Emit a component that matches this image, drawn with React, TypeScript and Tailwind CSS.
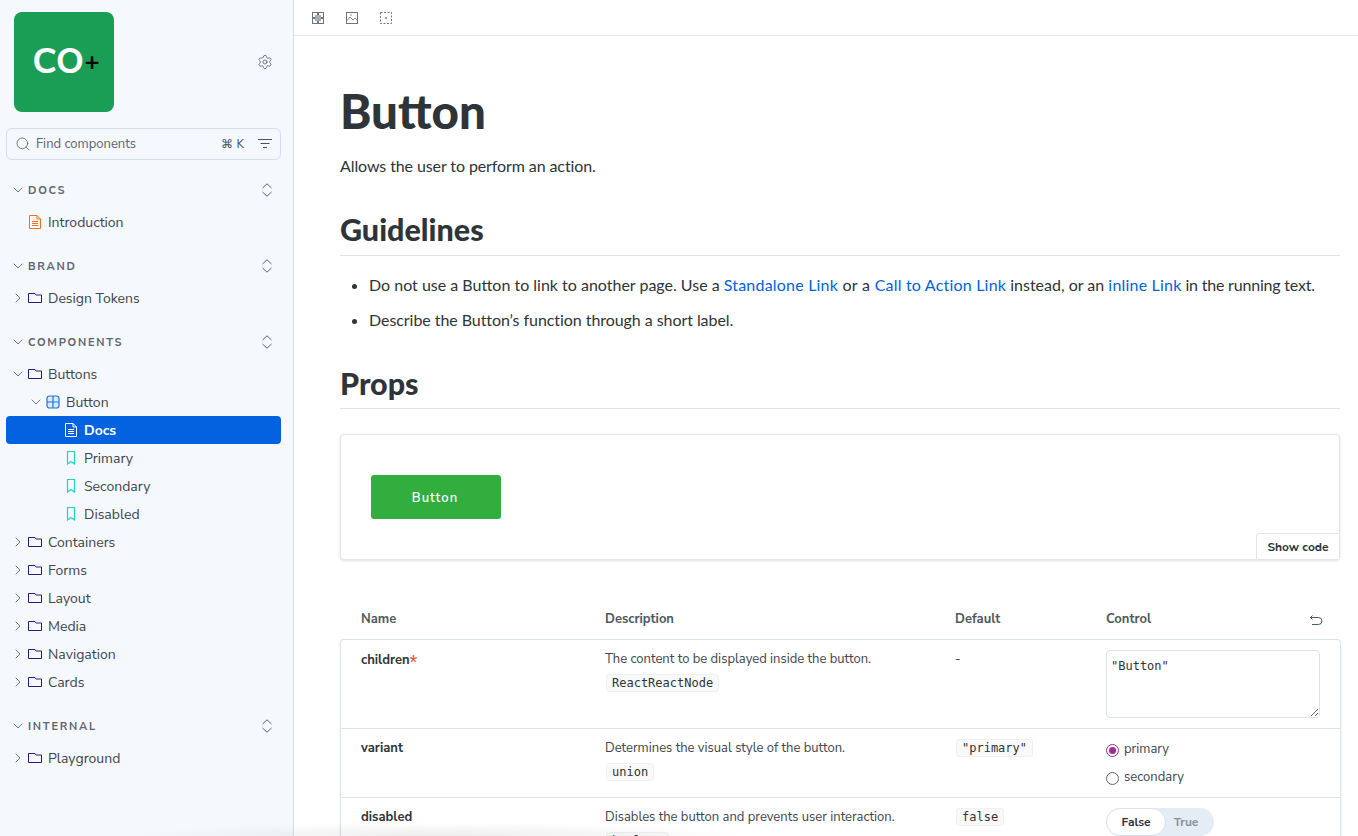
import React from "react";
import { ChevronDown, ChevronRight, Search, Settings } from "lucide-react";

const sans = "font-['Nunito_Sans','Noto_Sans','Open_Sans',sans-serif]";

function Folder() {
  return (
    <svg width="14" height="14" viewBox="0 0 14 14" fill="none" className="shrink-0">
      <path d="M.5 2.500h6.500l1 1.500h5.500v7.500H.5z" stroke="#2a1a7e" strokeWidth="1" />
    </svg>
  );
}
function Doc({ color }: { color: string }) {
  return (
    <svg width="12" height="14" viewBox="0 0 12 14" fill="none" className="shrink-0">
      <path d="M.5.5h7.500l3.500 3.500v9.500H.5z" stroke={color} />
      <path d="M8 .5V4h3.500M3 6.500h6M3 8.500h6M3 10.500h6" stroke={color} />
    </svg>
  );
}
function Mark() {
  return (
    <svg width="10" height="14" viewBox="0 0 10 14" fill="none" className="shrink-0">
      <path d="M1.500.5h7v12.500L5 10.500 1.500 13z" stroke="#22d3c5" strokeWidth="1.200" />
    </svg>
  );
}
function Comp() {
  return (
    <svg width="14" height="14" viewBox="0 0 14 14" fill="none" className="shrink-0">
      <rect x="1" y="1" width="12" height="12" rx="2.500" stroke="#1e77e0" strokeWidth="1.200" fill="#d9e8fa" />
      <path d="M7 1v12M1 7h12" stroke="#1e77e0" strokeWidth="1.200" />
    </svg>
  );
}

function Heading({ label }: { label: string }) {
  return (
    <div className="mb-[4px] flex h-[28px] items-center pl-[10px] pr-[21px]">
      <ChevronDown size={16} strokeWidth={1.300} className="mr-[2px] text-[#5c6570]" />
      <span className="translate-y-[1px] text-[11px] font-bold tracking-[0.16em] text-[#5c6570]">{label}</span>
      <svg width="10" height="14" viewBox="0 0 10 14" fill="none" stroke="#5c6570" strokeWidth="1" className="ml-auto">
        <path d="M.5 5 5 .8 9.500 5M.5 9 5 13.200 9.500 9" />
      </svg>
    </div>
  );
}

function Row({ label, open, icon, pad = 14, active }: { label: string; open?: boolean | null; icon: React.ReactNode; pad?: number; active?: boolean }) {
  const Chev = open ? ChevronDown : ChevronRight;
  return (
    <div className={`ml-[6px] mr-[12px] flex h-[28px] items-center rounded-[4px] text-[14px] ${active ? "bg-[#0262e0] font-bold text-white" : "text-[#40464e]"}`} style={{ paddingLeft: pad - 6 }}>
      <span className="flex w-[14px] shrink-0 justify-start">
        {open !== null && open !== undefined ? <Chev size={16} strokeWidth={1.300} className="-ml-[4px] shrink-0 text-[#5c6570]" /> : null}
      </span>
      <span className="flex w-[14px] shrink-0 justify-center">{icon}</span>
      <span className="ml-[6px]">{label}</span>
    </div>
  );
}

function Code({ children }: { children: React.ReactNode }) {
  return (
    <code className="ml-[1px] inline-block rounded-[3px] border border-[#eef0f2] bg-[#f9f9f9] px-[5px] py-0 font-['DejaVu_Sans_Mono',monospace] text-[12px] leading-[16px] text-[#2e3438]">
      {children}
    </code>
  );
}

const linkCls = "text-[#0262e0] tracking-[0.2px]";

export default function App() {
  return (
    <div className={`relative flex h-[836px] w-[1358px] overflow-hidden bg-white ${sans}`}>
      <aside className="h-full w-[294px] shrink-0 border-r border-[#d9dfe6] bg-[#f5f8fc]">
        <div className="flex h-[128px] items-start pl-[14px] pt-[12px]">
          <div className="flex h-[100px] w-[100px] items-center justify-center rounded-[8px] bg-[#1a9e56] pl-[4px] text-[36px] font-bold leading-none">
            <span className="text-white">CO</span>
            <span className="text-[26px] font-bold text-black">+</span>
          </div>
          <Settings size={16} strokeWidth={1.100} className="ml-[143px] mt-[42px] text-[#4a525b]" />
        </div>
        <div className="ml-[6px] mr-[12px] flex h-[32px] items-center rounded-[6px] border border-[#cfdff0] bg-[#f5f8fc] pl-[8px] pr-[8px] text-[13px] text-[#5c6570]">
          <Search size={16} strokeWidth={1.100} className="mr-[5px] text-[#4a525b]" />
          <span className="pt-[2px]">Find components</span>
          <span className="ml-auto mr-[14px] text-[12px] text-[#4a525b]">⌘ K</span>
          <svg width="14" height="12" viewBox="0 0 14 12" fill="none" stroke="#4a525b" strokeWidth="1">
            <path d="M0 1.500h14M2.500 5.500h9M5 9.500h4" />
          </svg>
        </div>
        <div className="mt-[16px]">
          <Heading label="DOCS" />
          <Row label="Introduction" pad={14} icon={<Doc color="#f2721c" />} />
        </div>
        <div className="mt-[16px]">
          <Heading label="BRAND" />
          <Row label="Design Tokens" open={false} icon={<Folder />} />
        </div>
        <div className="mt-[16px]">
          <Heading label="COMPONENTS" />
          <Row label="Buttons" open icon={<Folder />} />
          <Row label="Button" open pad={32} icon={<Comp />} />
          <Row label="Docs" pad={50} active icon={<Doc color="#ffffff" />} />
          <Row label="Primary" pad={50} icon={<Mark />} />
          <Row label="Secondary" pad={50} icon={<Mark />} />
          <Row label="Disabled" pad={50} icon={<Mark />} />
          {["Containers", "Forms", "Layout", "Media", "Navigation", "Cards"].map((l) => (
            <Row key={l} label={l} open={false} icon={<Folder />} />
          ))}
        </div>
        <div className="mt-[16px]">
          <Heading label="INTERNAL" />
          <Row label="Playground" open={false} icon={<Folder />} />
        </div>
      </aside>

      <main className="min-w-0 flex-1">
        <div className="flex h-[36px] items-center gap-[22px] border-b border-[#e5e7e9] pl-[18px] text-[#6d747c]">
          <svg width="12" height="12" viewBox="0 0 12 12" fill="none" stroke="#6d747c">
            <rect x=".5" y=".5" width="5" height="5" />
            <rect x="6.500" y=".5" width="5" height="5" />
            <rect x=".5" y="6.500" width="5" height="5" />
            <rect x="6.500" y="6.500" width="5" height="5" />
            <rect x="3" y="3" width="6" height="6" fill="#a8acb1" stroke="none" />
          </svg>
          <svg width="12" height="12" viewBox="0 0 12 12" fill="none" stroke="#6d747c">
            <rect x=".5" y=".5" width="11" height="11" />
            <path d="M.5 9 4 5l3 3 2-2 2.500 2.500" strokeWidth=".8" />
            <circle cx="5" cy="3" r=".7" fill="#6d747c" stroke="none" />
          </svg>
          <svg width="12" height="12" viewBox="0 0 12 12" fill="none" stroke="#6d747c">
            <rect x=".5" y=".5" width="11" height="11" strokeDasharray="2 1.500" />
            <circle cx="6" cy="6" r=".9" fill="#6d747c" stroke="none" />
          </svg>
        </div>

        <div className="pl-[46px] pr-[18px] font-['Lato',sans-serif] text-[#2e3438]">
          <h1 className="mt-[43px] text-[47.500px] font-black leading-[64px]">Button</h1>
          <p className="mt-[11px] text-[16px] leading-[24px] tracking-[-0.1px]">Allows the user to perform an action.</p>
          <h2 className="mt-[31px] border-b border-[#e0e2e4] pb-[6px] text-[30.500px] font-black leading-[40px]">Guidelines</h2>
          <ul className="mt-[17px] list-disc pl-[29px] text-[16px] leading-[24px]">
            <li>
              Do not use a Button to link to another page. Use a <span className={linkCls}>Standalone Link</span>
              <span className="tracking-[0.3px]"> or a </span>
              <span className={linkCls}>Call to Action Link</span> instead, or an <span className={linkCls}>inline Link</span>
              <span className="tracking-[-0.2px]"> in the running text.</span>
            </li>
            <li className="mt-[11px] tracking-[-0.06px]">Describe the Button’s function through a short label.</li>
          </ul>
          <h2 className="mt-[31px] border-b border-[#e0e2e4] pb-[5px] text-[30.500px] font-black leading-[40px]">Props</h2>

          <div className="relative mt-[25px] h-[126px] rounded-[4px] border border-[#e3e5e8] bg-white pl-[30px] pt-[40px] shadow-[0_1px_3px_rgba(0,0,0,0.12)]">
            <button className={`h-[44px] w-[130px] rounded-[3px] bg-[#31ae3d] pr-[2px] pt-[4px] text-[13px] font-semibold tracking-[0.08em] text-white ${sans}`}>Button</button>
            <div className={`absolute bottom-0 right-0 flex h-[26px] w-[83px] items-center justify-center rounded-tl-[4px] border-l border-t border-[#e3e5e8] bg-white text-[12px] font-bold text-[#2e3438] ${sans}`}>
              Show code
            </div>
          </div>
        </div>

        <div className={`ml-[46px] w-[1001px] ${sans} text-[13px] text-[#2e3438]`}>
          <div className="mt-[42px] flex h-[37px] items-center pb-[2px] font-bold text-[#4f5861]">
            <div className="w-[265px] pl-[21px]">Name</div>
            <div className="w-[350px]">Description</div>
            <div className="w-[151px]">Default</div>
            <div>Control</div>
            <svg width="14" height="14" viewBox="0 0 14 14" fill="none" stroke="#4f5861" className="ml-auto mr-[18px] mt-[3px]">
              <path d="M3.500 1.500 1.500 3.500l2 2M1.500 3.500h8a3 3 0 0 1 0 7H3" strokeWidth="1" />
            </svg>
          </div>
          <div className="rounded-t-[4px] border-x border-t border-[#dde3ea] shadow-[0_1px_3px_rgba(0,0,0,0.08)]">
            <div className="flex h-[89px] border-b border-[#dde3ea]">
              <div className="w-[264px] pl-[20px] pt-[11px] font-bold">
                children<span className="inline-block translate-y-[5px] font-['Liberation_Sans',sans-serif] text-[20px] font-normal leading-[10px] text-[#f5502f]">*</span>
              </div>
              <div className="w-[350px] pt-[10px] text-[#40464e]">
                <div>The content to be displayed inside the button.</div>
                <div className="mt-[4px]"><Code>ReactReactNode</Code></div>
              </div>
              <div className="w-[151px] pt-[10px] text-[#40464e]">-</div>
              <div className="pt-[10px]">
                <textarea
                  readOnly
                  defaultValue={'"Button"'}
                  className="block h-[68px] w-[214px] rounded-[4px] border border-[#dde3ea] px-[4px] py-[7px] font-['DejaVu_Sans_Mono',monospace] text-[12px] leading-[16px] text-[#2e3438]"
                />
              </div>
            </div>
            <div className="flex h-[69px] border-b border-[#dde3ea]">
              <div className="w-[264px] pl-[20px] pt-[10px] font-bold">variant</div>
              <div className="w-[350px] pt-[10px] text-[#40464e]">
                <div>Determines the visual style of the button.</div>
                <div className="mt-[4px]"><Code>union</Code></div>
              </div>
              <div className="w-[151px] pt-[10px]"><Code>"primary"</Code></div>
              <div className="pt-[12px] text-[#40464e]">
                <div className="flex h-[18px] items-center">
                  <span className="mr-[5px] flex h-[13px] w-[13px] items-center justify-center rounded-full border border-[#9b2f8f]">
                    <span className="h-[7px] w-[7px] rounded-full bg-[#9b2f8f]" />
                  </span>
                  primary
                </div>
                <div className="mt-[10px] flex h-[18px] items-center">
                  <span className="mr-[5px] h-[13px] w-[13px] rounded-full border border-[#666]" />
                  secondary
                </div>
              </div>
            </div>
            <div className="flex h-[60px]">
              <div className="w-[264px] pl-[20px] pt-[10px] font-bold">disabled</div>
              <div className="w-[350px] pt-[10px] text-[#40464e]">
                <div>Disables the button and prevents user interaction.</div>
                <div className="mt-[4px]"><Code>boolean</Code></div>
              </div>
              <div className="w-[151px] pt-[10px]"><Code>false</Code></div>
              <div className="pt-[10px]">
                <div className="flex h-[28px] w-[108px] items-center rounded-full bg-[#e4edf6] text-[12px] font-bold">
                  <span className="flex h-[28px] w-[60px] items-center justify-center rounded-full border border-[#dde3ea] bg-white text-[#2e3438]">False</span>
                  <span className="flex-1 pr-[8px] text-center text-[#8a9199]">True</span>
                </div>
              </div>
            </div>
          </div>
        </div>
      </main>
      <div className="pointer-events-none absolute bottom-0 left-[130px] h-[14px] w-[620px] bg-[radial-gradient(ellipse_at_bottom,rgba(0,0,0,0.07),transparent_70%)]" />
    </div>
  );
}
